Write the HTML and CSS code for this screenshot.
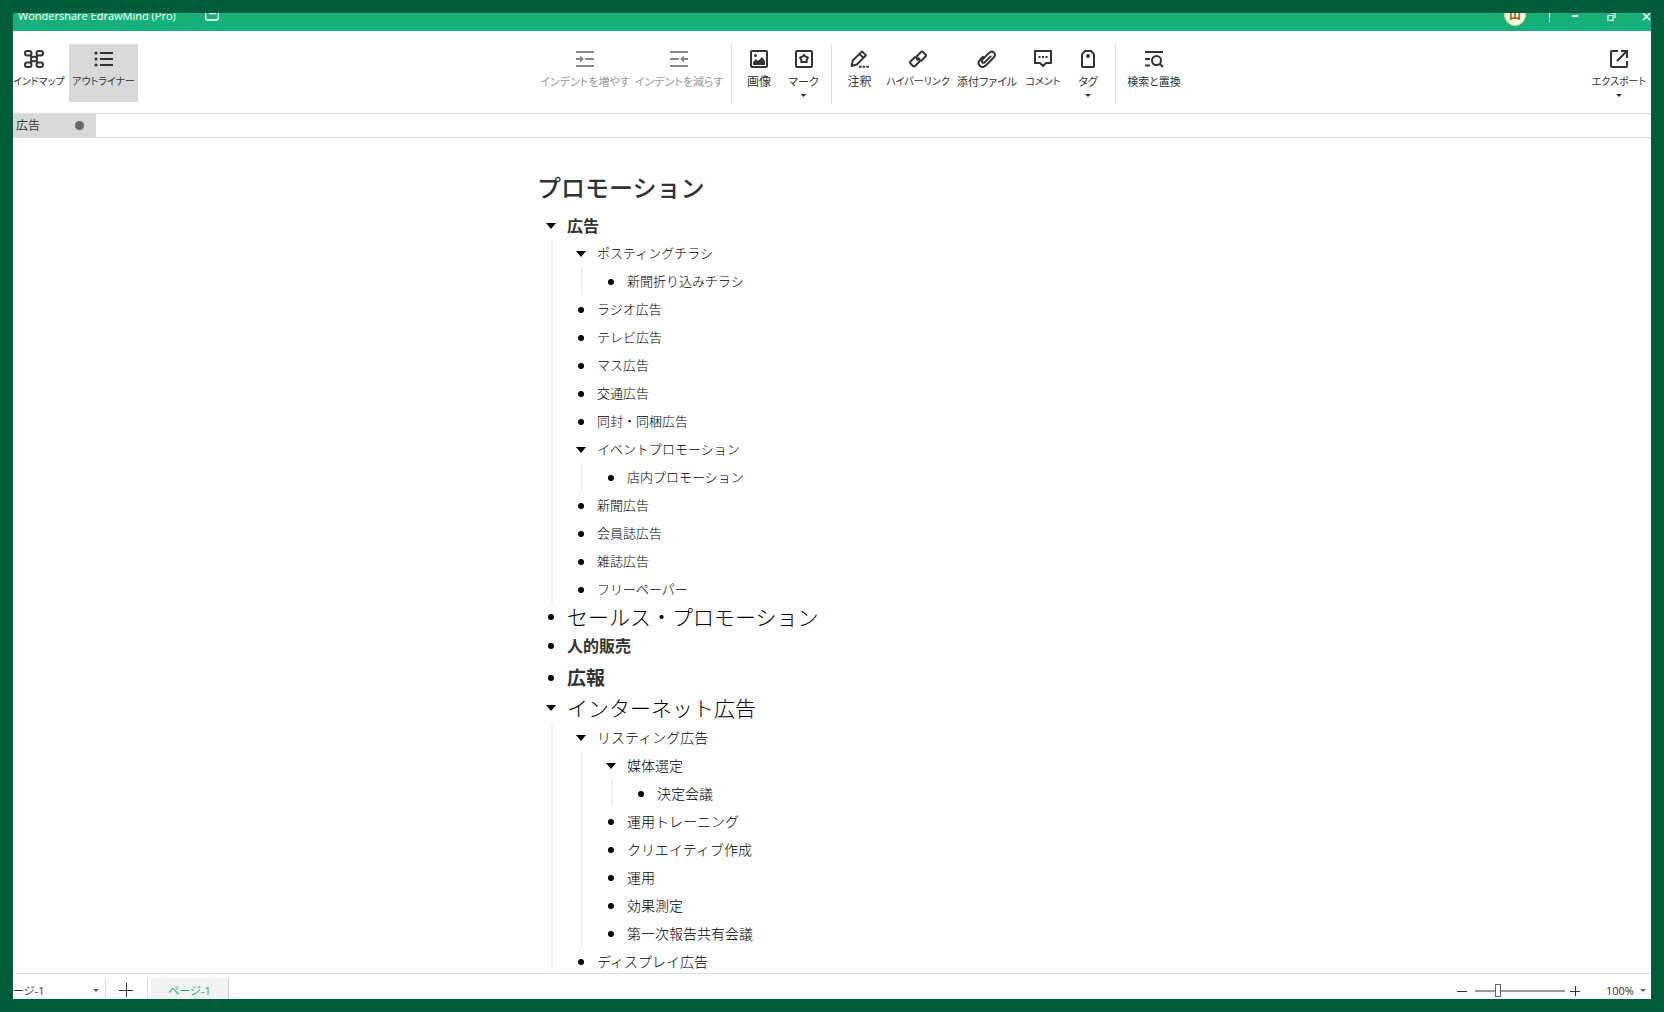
FILE: index.html
```html
<!DOCTYPE html>
<html lang="ja">
<head>
<meta charset="utf-8">
<title>Wondershare EdrawMind (Pro)</title>
<link rel="stylesheet" href="styles.css">
</head>
<body>
<header class="titlebar">
  <span class="app-name">Wondershare EdrawMind (Pro)</span>
  <button class="win-btn save" aria-label="保存"><svg width="14" height="14" viewBox="0 0 14 14"><path d="M.7 0v11q0 2 2 2h8.600q2 0 2-2V0M4 6.500h6V3" fill="none" stroke="#fff" stroke-width="1.400"/></svg></button>
  <div class="window-controls">
    <span class="avatar">山</span>
    <span class="bar"></span>
    <button class="win-btn" aria-label="最小化"><svg width="36" height="12"><path d="M15 6h6" stroke="#fff" stroke-width="2"/></svg></button>
    <button class="win-btn" aria-label="元に戻す"><svg width="36" height="12"><path d="M15 5.500h5v5h-5zM17 3h5v5" fill="none" stroke="#fff" stroke-width="1.200"/></svg></button>
    <button class="win-btn" aria-label="閉じる"><svg width="36" height="12"><path d="m14 3 7 7m0-7-7 7" stroke="#fff" stroke-width="1.500"/></svg></button>
  </div>
</header>

<nav class="toolbar" aria-label="ツールバー">
  <div class="group">
    <button class="tool kana mindmap">
      <svg class="icon" viewBox="0 0 20 18"><g fill="none" stroke="#333" stroke-width="2"><rect x="1" y="1" width="6.500" height="4.500" rx="2.200"/><rect x="12.500" y="1" width="6.500" height="4.500" rx="2.200"/><rect x="1" y="12.500" width="6.500" height="4.500" rx="2.200"/><rect x="12.500" y="12.500" width="6.500" height="4.500" rx="2.200"/><rect x="7" y="6.800" width="6" height="4.400" rx="2.200"/><path d="m6 5 2.300 2.500M14 5l-2.300 2.500M6 13l2.300-2.500m5.700 2.500-2.300-2.500"/></g></svg>
      <span>インドマップ</span>
    </button>
    <button class="tool kana active w69">
      <svg class="icon" viewBox="0 0 20 18"><path d="M6 3h13M6 9h13M6 15h13" stroke="#333" stroke-width="2"/><g fill="#333"><circle cx="2" cy="3" r="1.600"/><circle cx="2" cy="9" r="1.600"/><circle cx="2" cy="15" r="1.600"/></g></svg>
      <span>アウトライナー</span>
    </button>
  </div>
  <div class="group">
    <button class="tool w94" disabled>
      <svg class="icon" viewBox="0 0 20 18"><g stroke="#888" stroke-width="2"><path d="M1 2h18M1 16h18M10 9h9M1 9h5"/></g><path d="M5 5.500 9 9l-4 3.500z" fill="#888"/></svg>
      <span>インデントを増やす</span>
    </button>
    <button class="tool w94" disabled>
      <svg class="icon" viewBox="0 0 20 18"><g stroke="#888" stroke-width="2"><path d="M1 2h18M1 16h18M1 9h9M14 9h5"/></g><path d="M15 5.500 11 9l4 3.500z" fill="#888"/></svg>
      <span>インデントを減らす</span>
    </button>
    <span class="divider"></span>
    <button class="tool kanji w44">
      <svg class="icon" viewBox="0 0 20 18"><rect x="2" y="1" width="16" height="16" rx="1" fill="none" stroke="#333" stroke-width="2"/><path d="M4 15v-3l3-3 2 2 4-4 3 4v4z" fill="#333"/><circle cx="6.500" cy="5.500" r="1.500" fill="#333"/></svg>
      <span>画像</span>
    </button>
    <button class="tool w45">
      <svg class="icon" viewBox="0 0 20 18"><g fill="none" stroke="#333" stroke-width="2" stroke-linejoin="round"><rect x="2" y="1" width="16" height="16" rx="1"/><path d="m10 4.800 1.500 1.800 2.500.9-1.300 2.200v2.600L10 11.900l-2.700.4V9.700L6 7.500l2.500-.9z" stroke-width="1.900"/></g></svg>
      <span>マーク</span><i class="caret"></i>
    </button>
    <span class="divider"></span>
    <button class="tool kanji w45">
      <svg class="icon" viewBox="0 0 20 18"><g fill="none" stroke="#333" stroke-width="1.900" stroke-linejoin="round"><path d="m1.500 16 1.300-5.500L12 1.300l4 4-9.200 9.200zM9.500 4l3.800 3.800"/><path d="M9 16.800h10" stroke-dasharray="2.500 1.200"/></g></svg>
      <span>注釈</span>
    </button>
    <button class="tool kana w72">
      <svg class="icon" viewBox="0 0 20 18"><g fill="none" stroke="#333" stroke-width="2" stroke-linejoin="round"><path d="m12.500 11.500 5-5q1-1 0-2L15 2q-1-1-2 0L8.500 6.500q-1 1 0 2l2 2"/><path d="m7.500 6.500-5 5q-1 1 0 2L5 16q1 1 2 0l4.500-4.500q1-1 0-2l-2-2"/></g></svg>
      <span>ハイパーリンク</span>
    </button>
    <button class="tool w66">
      <svg class="icon" viewBox="0 0 20 18"><path d="m13.500 6.500-5.600 5.600q-1.500 1.200-2.600.1t.1-2.600l6.300-6.300q3-2.900 5.300-.7t-.5 5.200L9 15.300q-3.400 3.200-6.200.5t.3-6.200L6 6.700" fill="none" stroke="#333" stroke-width="2" stroke-linecap="round"/></svg>
      <span>添付ファイル</span>
    </button>
    <button class="tool kana w46">
      <svg class="icon" viewBox="0 0 20 18"><path d="M2 1h16v12h-5l-3 3-3-3H2z" fill="none" stroke="#333" stroke-width="2" stroke-linejoin="round"/><path d="M5.500 7h2m1.500 0h2m1.500 0h2" stroke="#333" stroke-width="2"/></svg>
      <span>コメント</span>
    </button>
    <button class="tool w44">
      <svg class="icon" viewBox="0 0 20 18"><path d="M4 5q0-.8.700-1.500L7 1h6l2.300 2.500Q16 4.200 16 5v11q0 1-1 1H5q-1 0-1-1z" fill="none" stroke="#333" stroke-width="2" stroke-linejoin="round"/><circle cx="10" cy="6" r="2" fill="#333"/></svg>
      <span>タグ</span><i class="caret"></i>
    </button>
    <span class="divider"></span>
    <button class="tool w66">
      <svg class="icon" viewBox="0 0 20 18"><g fill="none" stroke="#333" stroke-width="2"><path d="M1 2h18M1 9h5M1 15.500h5"/><circle cx="12.500" cy="10.500" r="4.500"/><path d="m15.500 13.500 3.500 3.500"/></g></svg>
      <span>検索と置換</span>
    </button>
  </div>
  <div class="group">
    <button class="tool kana w64">
      <svg class="icon" viewBox="0 0 20 18"><path d="M9 1H3q-1 0-1 1v14q0 1 1 1h14q1 0 1-1v-5M8 11l9.500-9.500M12 1h6v7" fill="none" stroke="#333" stroke-width="2"/></svg>
      <span>エクスポート</span><i class="caret"></i>
    </button>
  </div>
</nav>

<div class="doc-tabs">
  <a class="doc-tab" href="#doc"><span>広告</span><i class="unsaved"></i></a>
</div>

<main id="doc">
  <article class="outline">
    <h1>プロモーション</h1>
    <ul>
      <li><div class="row bold"><button class="toggle" aria-label="折りたたむ"></button>広告</div>
        <ul>
          <li><div class="row"><button class="toggle" aria-label="折りたたむ"></button>ポスティングチラシ</div>
            <ul><li><div class="row"><i class="dot"></i>新聞折り込みチラシ</div></li></ul>
          </li>
          <li><div class="row"><i class="dot"></i>ラジオ広告</div></li>
          <li><div class="row"><i class="dot"></i>テレビ広告</div></li>
          <li><div class="row"><i class="dot"></i>マス広告</div></li>
          <li><div class="row"><i class="dot"></i>交通広告</div></li>
          <li><div class="row"><i class="dot"></i>同封・同梱広告</div></li>
          <li><div class="row"><button class="toggle" aria-label="折りたたむ"></button>イベントプロモーション</div>
            <ul><li><div class="row"><i class="dot"></i>店内プロモーション</div></li></ul>
          </li>
          <li><div class="row"><i class="dot"></i>新聞広告</div></li>
          <li><div class="row"><i class="dot"></i>会員誌広告</div></li>
          <li><div class="row"><i class="dot"></i>雑誌広告</div></li>
          <li><div class="row"><i class="dot"></i>フリーペーパー</div></li>
        </ul>
      </li>
      <li><div class="row mincho"><i class="dot"></i>セールス・プロモーション</div></li>
      <li><div class="row bold tall"><i class="dot"></i>人的販売</div></li>
      <li><div class="row bold large"><i class="dot"></i>広報</div></li>
      <li><div class="row mincho tall"><button class="toggle" aria-label="折りたたむ"></button>インターネット広告</div>
        <ul class="fine">
          <li><div class="row"><button class="toggle" aria-label="折りたたむ"></button>リスティング広告</div>
            <ul>
              <li><div class="row"><button class="toggle" aria-label="折りたたむ"></button>媒体選定</div>
                <ul><li><div class="row"><i class="dot"></i>決定会議</div></li></ul>
              </li>
              <li><div class="row"><i class="dot"></i>運用トレーニング</div></li>
              <li><div class="row"><i class="dot"></i>クリエイティブ作成</div></li>
              <li><div class="row"><i class="dot"></i>運用</div></li>
              <li><div class="row"><i class="dot"></i>効果測定</div></li>
              <li><div class="row"><i class="dot"></i>第一次報告共有会議</div></li>
            </ul>
          </li>
          <li><div class="row"><i class="dot"></i>ディスプレイ広告</div></li>
        </ul>
      </li>
    </ul>
  </article>
</main>

<footer class="statusbar">
  <label class="picker page-picker"><select aria-label="ページ"><option>ージ-1</option></select><i class="caret"></i></label>
  <button class="add" aria-label="ページを追加"><svg width="14" height="14"><path d="M0 7.500h14M7.500 0v14" stroke="#333"/></svg></button>
  <a class="page-tab" href="#doc">ページ-1</a>
  <div class="zoom">
    <button aria-label="縮小"><svg width="12" height="12"><path d="M1 6.500h10" stroke="#333"/></svg></button>
    <input type="range" min="0" max="100" value="24" aria-label="ズーム">
    <button aria-label="拡大"><svg width="12" height="12"><path d="M1 6.500h10M6.500 1v10" stroke="#333"/></svg></button>
    <label class="picker zoom-picker"><select aria-label="倍率"><option>100%</option></select><i class="caret"></i></label>
  </div>
</footer>
</body>
</html>
```
FILE: styles.css
```css
* { box-sizing: border-box; }

body {
  margin: 0;
  height: 100vh;
  border: 13px solid #005c3a;
  display: flex;
  flex-direction: column;
  overflow: hidden;
  background: #fff;
  color: #333;
  font: 12px/16px "Open Sans", "Noto Sans CJK JP", sans-serif;
}

button, select { font: inherit; color: inherit; border: 0; padding: 0; background: none; }
a { color: inherit; text-decoration: none; }
ul { list-style: none; margin: 0; padding: 0; }

/* Title bar */
.titlebar {
  flex: none;
  height: 18px;
  display: flex;
  align-items: flex-end;
  overflow: hidden;
  background: #17b07a;
  color: #fff;
}
.app-name { width: 192px; padding: 0 0 7px 5px; font-size: 11px; }
.win-btn { display: flex; }
.save { padding-bottom: 10px; }
.window-controls { margin: 0 -14px 0 auto; display: flex; align-items: flex-end; }
.window-controls .win-btn { padding-bottom: 9px; }
.avatar {
  width: 22px;
  height: 22px;
  margin: 0 23px 5px 0;
  border: 1px solid #d8cf9a;
  border-radius: 50%;
  background: #fff6dc;
  color: #8a6420;
  font-weight: bold;
  line-height: 20px;
  text-align: center;
}
.bar { width: 1px; height: 16px; margin: 0 7px 9px 0; background: #fff; }

/* Toolbar */
.toolbar {
  flex: none;
  height: 83px;
  padding-top: 13px;
  display: flex;
  justify-content: space-between;
  border-bottom: 1px solid #ddd;
}
.group { display: flex; align-items: flex-start; }
.tool {
  height: 58px;
  padding-top: 6px;
  display: flex;
  flex-direction: column;
  align-items: center;
  font-size: 11px;
  white-space: nowrap;
  font-family: "Noto Sans CJK JP", sans-serif;
  font-feature-settings: "palt";
}
.kana { font-size: 10px; }
.kanji { font-size: 12px; }
.tool:disabled { color: #999; }
.icon { width: 20px; height: 18px; margin-bottom: 5px; flex: none; }
.tool .caret { margin-top: 5px; }
.active { background: #d9d9d9; }
.mindmap { width: 56px; align-items: flex-start; }
.mindmap .icon { margin-left: 11px; }
.w44 { width: 44px; }
.w45 { width: 45px; }
.w46 { width: 46px; }
.w64 { width: 64px; }
.w66 { width: 66px; }
.w69 { width: 69px; }
.w72 { width: 72px; }
.w94 { width: 94px; }
.divider { width: 1px; height: 60px; margin: 0 5px; background: #ddd; }
.caret {
  flex: none;
  width: 6px;
  height: 3px;
  background: #333;
  clip-path: polygon(0 0, 100% 0, 50% 100%);
}

/* Document tabs */
.doc-tabs { flex: none; height: 24px; display: flex; border-bottom: 1px solid #ddd; }
.doc-tab {
  width: 83px;
  padding: 0 12px 0 3px;
  display: flex;
  align-items: center;
  justify-content: space-between;
  background: #d9d9d9;
}
.unsaved { width: 9px; height: 9px; border-radius: 50%; background: #666; }

/* Outline */
main { flex: 1; min-height: 0; overflow: hidden; }
.outline {
  max-width: 590px;
  margin: 0 auto;
  padding-top: 25px;
  font-family: "Noto Sans CJK JP", sans-serif;
  font-size: 13px;
}
h1 { margin: 0; font-size: 24px; font-weight: 500; line-height: 48px; }
.outline ul ul { margin-left: 14px; padding-left: 14px; border-left: 2px solid #f0f0f0; }
.row { height: 28px; display: flex; align-items: center; font-weight: 300; color: #000; }
.toggle, .dot { flex: none; width: 30px; height: 28px; display: flex; align-items: center; padding: 2px 0 0 9px; }
.dot { padding-left: 11px; }
.toggle::before {
  content: "";
  width: 10px;
  height: 6px;
  background: #000;
  clip-path: polygon(0 0, 100% 0, 50% 100%);
}
.dot::before { content: ""; width: 6px; height: 6px; border-radius: 50%; background: #000; }
.bold { font-size: 16px; font-weight: bold; color: #333; }
.mincho { font-size: 21px; padding-bottom: 2px; }
.tall { height: 30px; padding-bottom: 2px; }
.large { height: 32px; font-size: 19px; }
.fine { font-size: 14px; }

/* Status bar */
.statusbar {
  flex: none;
  height: 26px;
  padding-top: 4px;
  display: flex;
  align-items: stretch;
  border-top: 1px solid #ddd;
  overflow: hidden;
  font-size: 11px;
}
.statusbar select { appearance: none; outline: 0; }
.picker { display: flex; align-items: center; padding-top: 4px; }
.page-picker { width: 93px; padding-right: 6px; justify-content: space-between; border-right: 1px solid #ddd; }
.picker .caret { background: #666; }
.add { width: 42px; padding: 3px 1px 0 0; display: grid; place-items: center; border-right: 1px solid #ddd; }
.page-tab {
  width: 78px;
  margin-left: 3px;
  padding-top: 5px;
  border-right: 1px solid #ccc;
  background: #f3f3f3;
  color: #1aa573;
  text-align: center;
}
.zoom { margin-left: auto; padding-right: 5px; display: flex; align-items: center; }
.zoom button { display: flex; padding-top: 4px; }
.zoom input {
  appearance: none;
  width: 90px;
  height: 13px;
  margin: 4px 4px 0 7px;
  background: linear-gradient(#999, #999) center / 100% 2px no-repeat;
}
.zoom input::-webkit-slider-thumb {
  appearance: none;
  width: 6px;
  height: 13px;
  border: 1px solid #666;
  background: #fff;
}
.zoom-picker { margin-left: 25px; gap: 6px; }
```
